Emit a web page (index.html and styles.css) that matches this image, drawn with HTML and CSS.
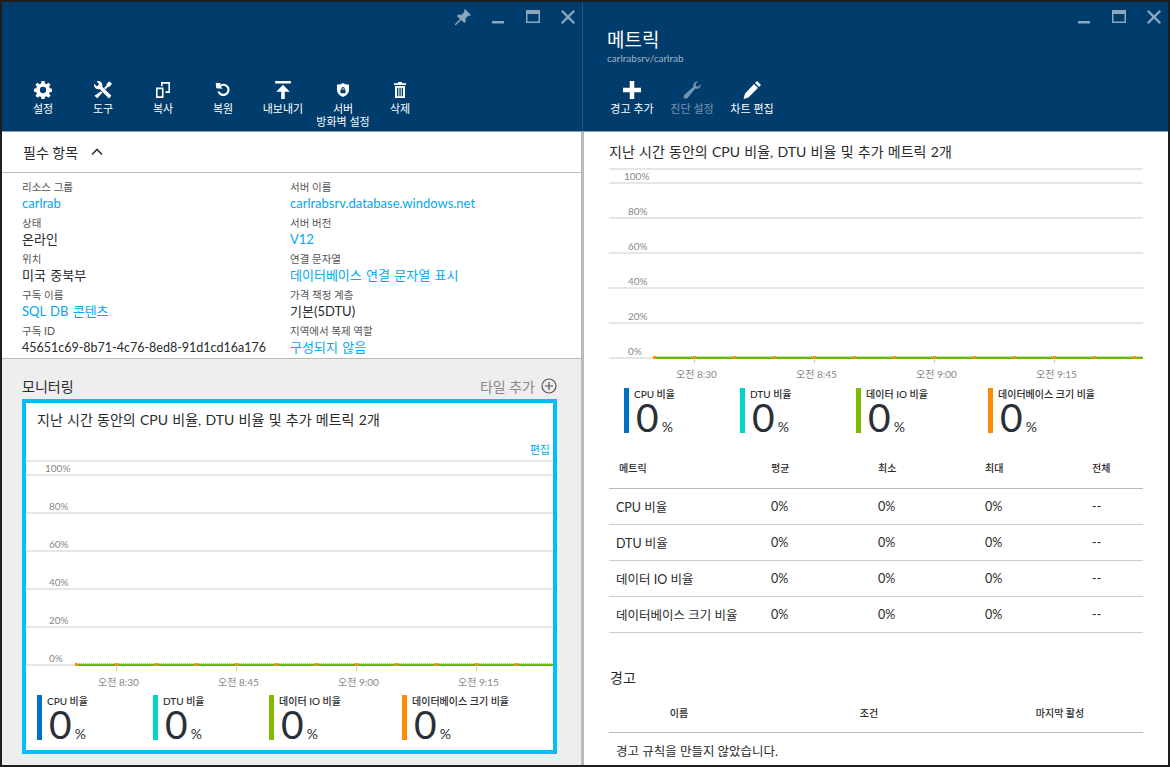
FILE: index.html
```html
<!DOCTYPE html>
<html lang="ko">
<head>
    <meta charset="UTF-8" />
    <title>메트릭</title>
    <link rel="stylesheet" href="styles.css">
</head>
<body>
<div class="desk">
    <section class="blade blade-left">
        <header class="blade-head">
            <div class="win-btns">
                <svg class="win-icon" viewBox="0 0 16 16"><path d="M10 0l6 6-1.500 1-1-.5-3 3 .2 3.300-1.500 1.200-3-3L1 16l-1 0 0-1 5-5-3-3 1.200-1.500 3.300.2 3-3-.5-1z"/></svg>
                <svg class="win-icon" viewBox="0 0 16 16"><rect x="2" y="12" width="12" height="2.500"/></svg>
                <svg class="win-icon" viewBox="0 0 16 16"><path fill-rule="evenodd" d="M1 1h14v13H1zM2.500 5v7.500h11V5z"/></svg>
                <svg class="win-icon" viewBox="0 0 16 16"><path d="M2.500 1L8 6.300 13.500 1 15 2.500 9.700 8 15 13.500 13.500 15 8 9.700 2.500 15 1 13.500 6.300 8 1 2.500z"/></svg>
            </div>
            <div class="cmds cmds-left">
                <div class="cmd">
                    <svg class="cmd-icon" viewBox="0 0 16 16"><path fill-rule="evenodd" d="M6.700 0h2.600l.4 2.200 1.300.6L12.900 1.500l1.800 1.800-1.300 1.900.6 1.300 2 .4v2.600l-2 .4-.6 1.300 1.300 1.900-1.800 1.800-1.900-1.300-1.300.6-.4 2.200H6.700l-.4-2.200-1.300-.6-1.900 1.300-1.800-1.800 1.300-1.900-.6-1.300-2-.4V6.900l2-.4.6-1.300-1.300-1.900 1.800-1.800L5 2.800l1.300-.6zM8 5.200a2.800 2.800 0 1 0 0 5.600 2.800 2.800 0 0 0 0-5.600z"/></svg>
                    <span>설정</span>
                </div>
                <div class="cmd">
                    <svg class="cmd-icon" viewBox="0 0 16 16"><path d="M3.500 0a3.800 3.800 0 0 1 3.800 5l8.200 8.200-2.200 2.300L5 7.200A3.800 3.800 0 0 1 .2 2.500l2.400 2.300 2-2L2.300.3A4 4 0 0 1 3.500 0z"/><path d="M13.500.3L16 2.500l-2.200 2.700-1.400.2-2.200 2.200-1.400-1.400 2.200-2.200.2-1.400zM6.200 9l1.300 1.400-4.700 5-2.400-2.200z"/></svg>
                    <span>도구</span>
                </div>
                <div class="cmd">
                    <svg class="cmd-icon" viewBox="0 0 18 18"><path fill-rule="evenodd" d="M2 6.500h7.500V17H2zM3.600 8.200v7.100h4.300V8.200z"/><path d="M7 1h9v11h-4.500v-1.700h2.900V2.700H8.600v2.500H7z"/></svg>
                    <span>복사</span>
                </div>
                <div class="cmd">
                    <svg class="cmd-icon" viewBox="0 0 16 16"><path d="M1.500 1.500l4.800.6L4.700 3.700A5.500 5.500 0 1 1 3 9.300h2a3.600 3.600 0 1 0 1-4.300L7.800 6.800 2 6.500z"/></svg>
                    <span>복원</span>
                </div>
                <div class="cmd">
                    <svg class="cmd-icon" viewBox="0 0 16 16"><path d="M1 0h14v2.200H1zM8 3.300l6 6.200h-4.400V16H6.400V9.500H2z"/></svg>
                    <span>내보내기</span>
                </div>
                <div class="cmd">
                    <svg class="cmd-icon" viewBox="-1 -1 18 18"><path fill-rule="evenodd" d="M8 1c1.700 1 3.500 1.500 6 1.600V8c0 3.200-2.500 5.500-6 7-3.500-1.500-6-3.800-6-7V2.600C4.500 2.500 6.300 2 8 1zM6.300 6.700v1.100h-.8v3.400h5V7.800h-.8V6.700a1.700 1.700 0 0 0-3.400 0zm1.100 0a.6.600 0 0 1 1.200 0v1.100H7.400z"/></svg>
                    <span>서버<br>방화벽 설정</span>
                </div>
                <div class="cmd">
                    <svg class="cmd-icon" viewBox="-1 -1 18 18"><path fill-rule="evenodd" d="M6 0h4v1.200h4v1.800H2V1.200h4zM3 4h10v12H3zM5 5.800v8.400h1.300V5.800zm2.400 0v8.400h1.300V5.800zm2.300 0v8.400H11V5.800z"/></svg>
                    <span>삭제</span>
                </div>
            </div>
        </header>

        <div class="blade-body">
            <div class="essentials-head">
                <span>필수 항목</span>
                <svg class="chevron" viewBox="0 0 12 8"><path d="M1 6.500L6 1.500l5 5" fill="none" stroke="#333" stroke-width="1.600"/></svg>
            </div>
            <div class="props">
                <div class="prop"><label>리소스 그룹</label><a>carlrab</a></div>
                <div class="prop"><label>서버 이름</label><a>carlrabsrv.database.windows.net</a></div>
                <div class="prop"><label>상태</label><b>온라인</b></div>
                <div class="prop"><label>서버 버전</label><a>V12</a></div>
                <div class="prop"><label>위치</label><b>미국 중북부</b></div>
                <div class="prop"><label>연결 문자열</label><a>데이터베이스 연결 문자열 표시</a></div>
                <div class="prop"><label>구독 이름</label><a>SQL DB 콘텐츠</a></div>
                <div class="prop"><label>가격 책정 계층</label><b>기본(5DTU)</b></div>
                <div class="prop"><label>구독 ID</label><b class="guid">45651c69-8b71-4c76-8ed8-91d1cd16a176</b></div>
                <div class="prop"><label>지역에서 복제 역할</label><a>구성되지 않음</a></div>
            </div>

            <div class="monitoring">
                <div class="mon-head">
                    <h2>모니터링</h2>
                    <div class="add-tile">
                        <span>타일 추가</span>
                        <svg viewBox="0 0 16 16"><circle cx="8" cy="8" r="7" fill="none" stroke="#555" stroke-width="1.200"/><path d="M8 4v8M4 8h8" stroke="#555" stroke-width="1.200"/></svg>
                    </div>
                </div>
                <div class="tile">
                    <div class="tile-title">지난 시간 동안의 CPU 비율, DTU 비율 및 추가 메트릭 2개</div>
                    <div class="tile-edit"><a>편집</a></div>
                    <div class="chart chart-tile">
                        <div class="grid-row"><span>100%</span></div>
                        <div class="grid-row"><span>80%</span></div>
                        <div class="grid-row"><span>60%</span></div>
                        <div class="grid-row"><span>40%</span></div>
                        <div class="grid-row"><span>20%</span></div>
                        <div class="grid-row"><span>0%</span></div>
                        <div class="series"></div>
                    </div>
                    <div class="x-axis">
                        <span>오전 8:30</span><span>오전 8:45</span><span>오전 9:00</span><span>오전 9:15</span>
                    </div>
                    <div class="legend">
                        <div class="leg leg-cpu"><h4>CPU 비율</h4><p>0<small>%</small></p></div>
                        <div class="leg leg-dtu"><h4>DTU 비율</h4><p>0<small>%</small></p></div>
                        <div class="leg leg-io"><h4>데이터 IO 비율</h4><p>0<small>%</small></p></div>
                        <div class="leg leg-size"><h4>데이터베이스 크기 비율</h4><p>0<small>%</small></p></div>
                    </div>
                </div>
            </div>
        </div>
    </section>

    <section class="blade blade-right">
        <header class="blade-head">
            <div class="win-btns">
                <svg class="win-icon" viewBox="0 0 16 16"><rect x="2" y="12" width="12" height="2.500"/></svg>
                <svg class="win-icon" viewBox="0 0 16 16"><path fill-rule="evenodd" d="M1 1h14v13H1zM2.500 5v7.500h11V5z"/></svg>
                <svg class="win-icon" viewBox="0 0 16 16"><path d="M2.500 1L8 6.300 13.500 1 15 2.500 9.700 8 15 13.500 13.500 15 8 9.700 2.500 15 1 13.500 6.300 8 1 2.500z"/></svg>
            </div>
            <div class="blade-title">
                <h1>메트릭</h1>
                <p>carlrabsrv/carlrab</p>
            </div>
            <div class="cmds cmds-right">
                <div class="cmd">
                    <svg class="cmd-icon" viewBox="0 0 16 16"><path d="M6 0h4v6h6v4h-6v6H6v-6H0V6h6z"/></svg>
                    <span>경고 추가</span>
                </div>
                <div class="cmd cmd-off">
                    <svg class="cmd-icon" viewBox="0 0 16 16"><path d="M15.800 2.600c.5 2-1.200 4.300-3.400 4.300-.5 0-1 0-1.400-.2L4 15c-.8.900-2.200 1-3 .2-.8-.8-.7-2 .1-2.800l8.200-7.300c-.2-.5-.2-1-.2-1.400C9.300 1.400 11.800-.300 13.500.3l-2.300 2.300.4 2 2 .4z"/></svg>
                    <span>진단 설정</span>
                </div>
                <div class="cmd">
                    <svg class="cmd-icon" viewBox="0 0 16 16"><path d="M12.500 0L16 3.500l-1.800 1.800-3.500-3.500zM9.800 2.700l3.500 3.500-8.500 8.500L.5 16l1.200-4.700-.1.100z"/></svg>
                    <span>차트 편집</span>
                </div>
            </div>
        </header>

        <div class="metrics-body">
            <h3 class="sec-title">지난 시간 동안의 CPU 비율, DTU 비율 및 추가 메트릭 2개</h3>
            <div class="chart chart-big">
                <div class="grid-row"><span>100%</span></div>
                <div class="grid-row"><span>80%</span></div>
                <div class="grid-row"><span>60%</span></div>
                <div class="grid-row"><span>40%</span></div>
                <div class="grid-row"><span>20%</span></div>
                <div class="grid-row"><span>0%</span></div>
                <div class="series"></div>
            </div>
            <div class="x-axis">
                <span>오전 8:30</span><span>오전 8:45</span><span>오전 9:00</span><span>오전 9:15</span>
            </div>
            <div class="legend">
                <div class="leg leg-cpu"><h4>CPU 비율</h4><p>0<small>%</small></p></div>
                <div class="leg leg-dtu"><h4>DTU 비율</h4><p>0<small>%</small></p></div>
                <div class="leg leg-io"><h4>데이터 IO 비율</h4><p>0<small>%</small></p></div>
                <div class="leg leg-size"><h4>데이터베이스 크기 비율</h4><p>0<small>%</small></p></div>
            </div>

            <table class="metric-table">
                <thead>
                    <tr><th>메트릭</th><th>평균</th><th>최소</th><th>최대</th><th>전체</th></tr>
                </thead>
                <tbody>
                    <tr><td>CPU 비율</td><td>0%</td><td>0%</td><td>0%</td><td>--</td></tr>
                    <tr><td>DTU 비율</td><td>0%</td><td>0%</td><td>0%</td><td>--</td></tr>
                    <tr><td>데이터 IO 비율</td><td>0%</td><td>0%</td><td>0%</td><td>--</td></tr>
                    <tr><td>데이터베이스 크기 비율</td><td>0%</td><td>0%</td><td>0%</td><td>--</td></tr>
                </tbody>
            </table>

            <h3 class="alert-title">경고</h3>
            <div class="alert-cols">
                <span>이름</span><span>조건</span><span>마지막 활성</span>
            </div>
            <div class="alert-empty">경고 규칙을 만들지 않았습니다.</div>
        </div>
    </section>
</div>
</body>
</html>
```

FILE: styles.css
```css
* {
    box-sizing: border-box;
}

html, body {
    margin: 0;
    height: 767px;
    overflow: hidden;
}

body {
    font-family: Lato, "Noto Sans CJK KR", sans-serif;
    color: #2a2a2a;
    background: #1e1e1e;
}

.desk {
    display: flex;
    height: 767px;
    padding: 2px 2px 0 2px;
}

.blade {
    height: 763px;
    overflow: hidden;
    background: white;
}

.blade-left {
    width: 582px;
    flex: none;
}

.blade-right {
    flex: 1;
}

/* header */
.blade-head {
    position: relative;
    height: 130px;
    background: #003c6c;
    border-bottom: 1px solid #8c9cac;
    color: white;
}

.blade-left .blade-head::after {
    content: "";
    position: absolute;
    top: 0;
    bottom: 0;
    right: 1px;
    width: 1px;
    background: #1d5684;
}

.win-btns {
    position: absolute;
    top: 7px;
    display: flex;
    gap: 19px;
}

.blade-left .win-btns {
    right: 8px;
}

.blade-right .win-btns {
    right: 6px;
}

.win-icon {
    width: 16px;
    height: 16px;
    fill: #8ba6bd;
}

.cmds {
    display: flex;
    position: absolute;
    top: 79px;
}

.cmds-left {
    left: 11px;
}

.cmds-right {
    left: 18px;
}

.cmd {
    width: 60px;
    text-align: center;
    font-size: 11px;
    line-height: 13px;
    white-space: nowrap;
}

.cmds-left .cmd:last-child {
    margin-left: -3px;
}

.cmd span {
    display: block;
    margin-top: 3px;
}

.cmd-icon {
    display: block;
    width: 18px;
    height: 18px;
    margin: 0 auto;
    fill: white;
}

.cmd-off {
    opacity: 0.45;
}

.blade-title {
    position: absolute;
    left: 23px;
    top: 26px;
}

.blade-title h1 {
    margin: 0;
    font-size: 19px;
    font-weight: 400;
    line-height: 24px;
}

.blade-title p {
    margin: 0;
    font-size: 10px;
    line-height: 12px;
    color: #9fb6c9;
}

/* left body, grey divider on the right */
.blade-body {
    border-right: 3px solid #bbb;
}

.essentials-head {
    display: flex;
    align-items: center;
    gap: 13px;
    height: 41px;
    padding-left: 21px;
    font-size: 14px;
    border-bottom: 1px solid #bbb;
}

.chevron {
    width: 12px;
    height: 8px;
}

.props {
    display: grid;
    grid-template-columns: 268px 1fr;
    grid-auto-rows: 36px;
    height: 186px;
    padding: 7px 0 0 20px;
    border-bottom: 1px solid #bbb;
}

.prop {
    font-size: 13px;
    line-height: 17px;
    word-spacing: 1px;
}

.prop label {
    display: block;
    font-size: 10.500px;
    line-height: 15px;
    word-spacing: 0;
    color: #555;
}

.prop a {
    color: #00a9ec;
}

.prop b {
    font-weight: 400;
}

.prop .guid {
    font-size: 12.500px;
}

.monitoring {
    background: #eee;
    height: 407px;
    padding: 0 24px 0 20px;
}

.mon-head {
    display: flex;
    justify-content: space-between;
    align-items: center;
    height: 40px;
    padding-top: 14px;
    font-size: 14px;
}

.mon-head h2 {
    margin: 0;
    font-size: 14px;
    font-weight: 400;
}

.add-tile {
    display: flex;
    align-items: center;
    gap: 6px;
    color: #888;
}

.add-tile svg {
    width: 16px;
    height: 16px;
}

.tile {
    height: 355px;
    background: white;
    border: 4px solid #00bef8;
}

.tile-title {
    padding: 7px 0 0 11px;
    font-size: 14px;
    line-height: 20px;
    word-spacing: 0.700px;
}

.tile-edit {
    text-align: right;
    font-size: 11px;
    line-height: 16px;
    padding: 12px 3px 0 0;
    color: #00a9ec;
}

/* chart */
.chart {
    position: relative;
    border-top: 2px solid #e6e6e6;
}

.grid-row {
    position: relative;
    border-bottom: 2px solid #e6e6e6;
    font-size: 10px;
    color: #888;
}

.grid-row span {
    position: absolute;
    bottom: 0;
    line-height: 12px;
}

.chart-tile {
    margin-top: 2px;
}

.chart-tile .grid-row {
    height: 38px;
}

.chart-tile .grid-row:first-child {
    height: 14px;
}

.chart-tile .grid-row span {
    left: 23px;
}

.chart-tile .grid-row:first-child span {
    left: 19px;
}

.chart-tile .grid-row:last-child span {
    left: 29px;
}

.chart-big .grid-row {
    height: 35px;
}

.chart-big {
    margin-right: 25px;
}

.chart-big .grid-row:first-child {
    height: 14px;
}

.chart-big .grid-row span {
    left: 19px;
}

.chart-big .grid-row:first-child span {
    left: 15px;
}

.chart-big .grid-row:last-child span {
    left: 25px;
}

/* green line with a dotted edge and orange marks */
.series {
    position: absolute;
    bottom: 0;
    right: 0;
    height: 3px;
    background:
        repeating-linear-gradient(90deg, #ff8c00 0 3px, transparent 3px 40px),
        linear-gradient(#6cbb00, #6cbb00) 0 100% / 100% 2px no-repeat,
        repeating-linear-gradient(90deg, #9ad17a 0 1px, #e6f3dc 1px 2px);
}

.chart-tile .series {
    left: 49px;
}

.chart-big .series {
    left: 44px;
}

.x-axis {
    display: flex;
    font-size: 10px;
    line-height: 14px;
    color: #888;
}

.x-axis span {
    position: relative;
    flex: none;
    width: 120px;
}

.x-axis span::before {
    content: "";
    position: absolute;
    left: 18px;
    top: -8px;
    width: 1px;
    height: 4px;
    background: #ccc;
}

.tile .x-axis {
    padding: 9px 0 0 72px;
}

.metrics-body .x-axis {
    padding: 8px 0 0 67px;
}

.legend {
    display: flex;
}

.tile .legend {
    padding: 6px 0 0 11px;
}

.tile .leg-cpu, .tile .leg-dtu {
    width: 116px;
}

.tile .leg-io {
    width: 133px;
}

.metrics-body .legend {
    padding: 7px 0 0 15px;
}

.metrics-body .leg-cpu, .metrics-body .leg-dtu {
    width: 116px;
}

.metrics-body .leg-io {
    width: 132px;
}

.leg {
    height: 45px;
    padding-left: 5px;
    border-left: 5px solid #0072c6;
}

.leg-dtu {
    border-left-color: #00d4cc;
}

.leg-io {
    border-left-color: #7fba00;
}

.leg-size {
    border-left-color: #ff8c00;
}

.leg h4 {
    margin: 0;
    font-size: 10px;
    font-weight: 500;
    line-height: 13px;
}

.leg p {
    margin: 0;
    padding-left: 2px;
    font-size: 39px;
    font-weight: 400;
    line-height: 32px;
    color: #2b3038;
}

.leg small {
    font-size: 14px;
    margin-left: 3px;
}

/* right body */
.metrics-body {
    padding-left: 25px;
}

.sec-title {
    margin: 0;
    padding-top: 9px;
    height: 36px;
    font-size: 14px;
    font-weight: 400;
    line-height: 22px;
    word-spacing: 0.700px;
}

.metric-table {
    width: 534px;
    margin-top: 15px;
    border-collapse: collapse;
    font-size: 12.500px;
}

.metric-table th {
    height: 40px;
    font-size: 10px;
    font-weight: 500;
    text-align: left;
    padding: 0 0 0 7px;
    border-bottom: 1px solid #bbb;
}

.metric-table th:first-child {
    padding-left: 10px;
}

.metric-table td {
    height: 36px;
    padding: 0 0 0 7px;
    border-bottom: 1px solid #ccc;
}

.metric-table th:nth-child(1), .metric-table td:nth-child(1) {
    width: 155px;
}

.metric-table th:nth-child(2), .metric-table td:nth-child(2),
.metric-table th:nth-child(3), .metric-table td:nth-child(3),
.metric-table th:nth-child(4), .metric-table td:nth-child(4) {
    width: 107px;
}

.alert-title {
    margin: 34px 0 0;
    padding-left: 1px;
    font-size: 14px;
    font-weight: 400;
    line-height: 22px;
}

.alert-cols {
    display: grid;
    grid-template-columns: 140px 240px 142px;
    width: 534px;
    height: 44px;
    padding-top: 16px;
    font-size: 10px;
    font-weight: 500;
    text-align: center;
    border-bottom: 1px solid #bbb;
}

.alert-empty {
    padding: 10px 0 0 7px;
    font-size: 12.500px;
    line-height: 18px;
}
```
